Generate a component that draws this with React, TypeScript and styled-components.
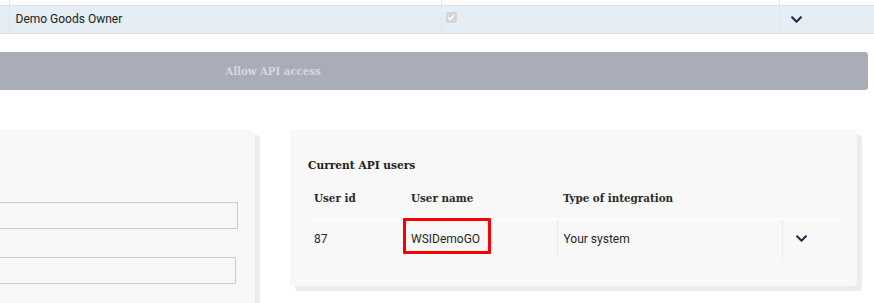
import React from "react"
import styled, { createGlobalStyle } from "styled-components"
import { FaChevronDown } from "react-icons/fa"

const GlobalStyle = createGlobalStyle`
  html, body {
    margin: 0;
    padding: 0;
    background: #fff;
    overflow: hidden;
  }
  body {
    font-family: Roboto, "Liberation Sans", sans-serif;
    font-size: 12px;
    color: #222;
  }
`

const slab = `"DejaVu Serif Condensed", "DejaVu Serif", "Liberation Serif", serif`

// the screenshot is a crop of a wider page, so the page starts off-screen
const Viewport = styled.div`
  width: 874px;
  height: 303px;
  overflow: hidden;
`

const Page = styled.div`
  width: 1190px;
  margin-left: -322px;
`

const OwnersTable = styled.table`
  width: 1200px;
  border-collapse: collapse;
  table-layout: fixed;
`

const Col = styled.col<{ $w?: number }>`
  width: ${(p) => (p.$w ? `${p.$w}px` : "auto")};
`

const OwnerRow = styled.tr<{ $active?: boolean }>`
  background: ${(p) => (p.$active ? "#e5eef4" : "#fff")};
  border-top: ${(p) => (p.$active ? "1px solid #dbe0e5" : "none")};
  border-bottom: ${(p) => (p.$active ? "1px solid #dbe0e5" : "none")};
  height: ${(p) => (p.$active ? "28px" : "5px")};
`

const OwnerCell = styled.td<{ $pad?: number }>`
  padding: 0 6px 0 ${(p) => p.$pad ?? 6}px;
  border-left: 1px solid #e3e7eb;
  line-height: 18px;
  vertical-align: middle;

  &:first-child {
    border-left: none;
  }
`

const FakeCheck = styled.span`
  display: inline-flex;
  align-items: center;
  justify-content: center;
  width: 11px;
  height: 11px;
  margin-top: -4px;
  border-radius: 2px;
  background: #d3d5d7;
  vertical-align: middle;
`

const Chevron = styled(FaChevronDown)`
  color: #1c2a48;
  width: 13px;
  height: 13px;
  display: block;
`

const AccessButton = styled.button`
  display: block;
  width: 100%;
  height: 38px;
  margin-top: 18px;
  border: none;
  border-radius: 3px;
  background: #a8adb8;
  color: #d5d8de;
  font-family: ${slab};
  font-weight: bold;
  font-size: 11.3px;
  cursor: not-allowed;
`

const Cards = styled.div`
  display: grid;
  grid-template-columns: 567px 567px;
  gap: 35px;
  padding: 0 11px 0 10px;
  margin-top: 40px;
  align-items: start;
`

const Card = styled.div<{ $tall?: boolean }>`
  background: #f8f8f8;
  border-radius: 4px;
  box-shadow: 5px 5px 0 0 #ececec;
  padding: 26px 17px 28px 18px;
  min-height: ${(p) => (p.$tall ? "240px" : "0")};
`

const FormStack = styled.div`
  display: flex;
  flex-direction: column;
  align-items: flex-end;
  gap: 28px;
  padding-top: 46px;
`

const TextInput = styled.input<{ $inset: number }>`
  box-sizing: border-box;
  width: calc(100% - ${(p) => p.$inset}px);
  height: 27px;
  margin-right: ${(p) => p.$inset}px;
  border: 1px solid #cacaca;
  background: #f7f7f7;
  border-radius: 1px;
`

const CardTitle = styled.h3`
  margin: 0 0 4px;
  font-family: ${slab};
  font-weight: bold;
  font-size: 11.8px;
  line-height: 18px;
  color: #222;
`

const UsersTable = styled.table`
  width: 532px;
  border-collapse: collapse;
  table-layout: fixed;
`

const HeadCell = styled.th`
  text-align: left;
  padding: 11px 6px 12px;
  line-height: 18px;
  font-family: ${slab};
  font-weight: bold;
  font-size: 11.5px;
  color: #2a2a2a;
  border-bottom: 1px solid #fff;
`

const BodyCell = styled.td<{ $divided?: boolean }>`
  padding: 10px 6px;
  line-height: 18px;
  color: #262626;
  border-left: ${(p) => (p.$divided ? "1px solid #ebebeb" : "none")};
  position: relative;
`

const ChevronCell = styled(BodyCell)`
  padding-left: 12px;
`

const Highlight = styled.span`
  position: absolute;
  left: -2px;
  top: -2px;
  width: 88px;
  height: 36px;
  box-sizing: border-box;
  border: 3px solid #ff0000;
  border-radius: 1px;
  pointer-events: none;
`

const CheckMark = () => (
  <svg width="8" height="7" viewBox="0 0 8 7">
    <path d="M1 3.6 L3 5.5 L7 1.2" fill="none" stroke="#fff" strokeWidth="1.4" />
  </svg>
)

export default function App() {
  return (
    <Viewport>
      <GlobalStyle />
      <Page>
        <OwnersTable>
          <colgroup>
            <Col $w={331} />
            <Col $w={432} />
            <Col $w={338} />
            <Col />
          </colgroup>
          <tbody>
            <OwnerRow>
              <OwnerCell />
              <OwnerCell />
              <OwnerCell />
              <OwnerCell />
            </OwnerRow>
            <OwnerRow $active>
              <OwnerCell />
              <OwnerCell>Demo Goods Owner</OwnerCell>
              <OwnerCell $pad={4}>
                <FakeCheck>
                  <CheckMark />
                </FakeCheck>
              </OwnerCell>
              <OwnerCell $pad={10}>
                <Chevron />
              </OwnerCell>
            </OwnerRow>
          </tbody>
        </OwnersTable>

        <AccessButton disabled>Allow API access</AccessButton>

        <Cards>
          <Card $tall>
            <FormStack>
              <TextInput $inset={0} />
              <TextInput $inset={2} />
            </FormStack>
          </Card>

          <Card>
            <CardTitle>Current API users</CardTitle>
            <UsersTable>
              <colgroup>
                <Col $w={97} />
                <Col $w={152} />
                <Col $w={225} />
                <Col $w={58} />
              </colgroup>
              <thead>
                <tr>
                  <HeadCell>User id</HeadCell>
                  <HeadCell>User name</HeadCell>
                  <HeadCell>Type of integration</HeadCell>
                  <HeadCell />
                </tr>
              </thead>
              <tbody>
                <tr>
                  <BodyCell>87</BodyCell>
                  <BodyCell>
                    WSIDemoGO
                    <Highlight />
                  </BodyCell>
                  <BodyCell $divided>Your system</BodyCell>
                  <ChevronCell $divided>
                    <Chevron />
                  </ChevronCell>
                </tr>
              </tbody>
            </UsersTable>
          </Card>
        </Cards>
      </Page>
    </Viewport>
  )
}
